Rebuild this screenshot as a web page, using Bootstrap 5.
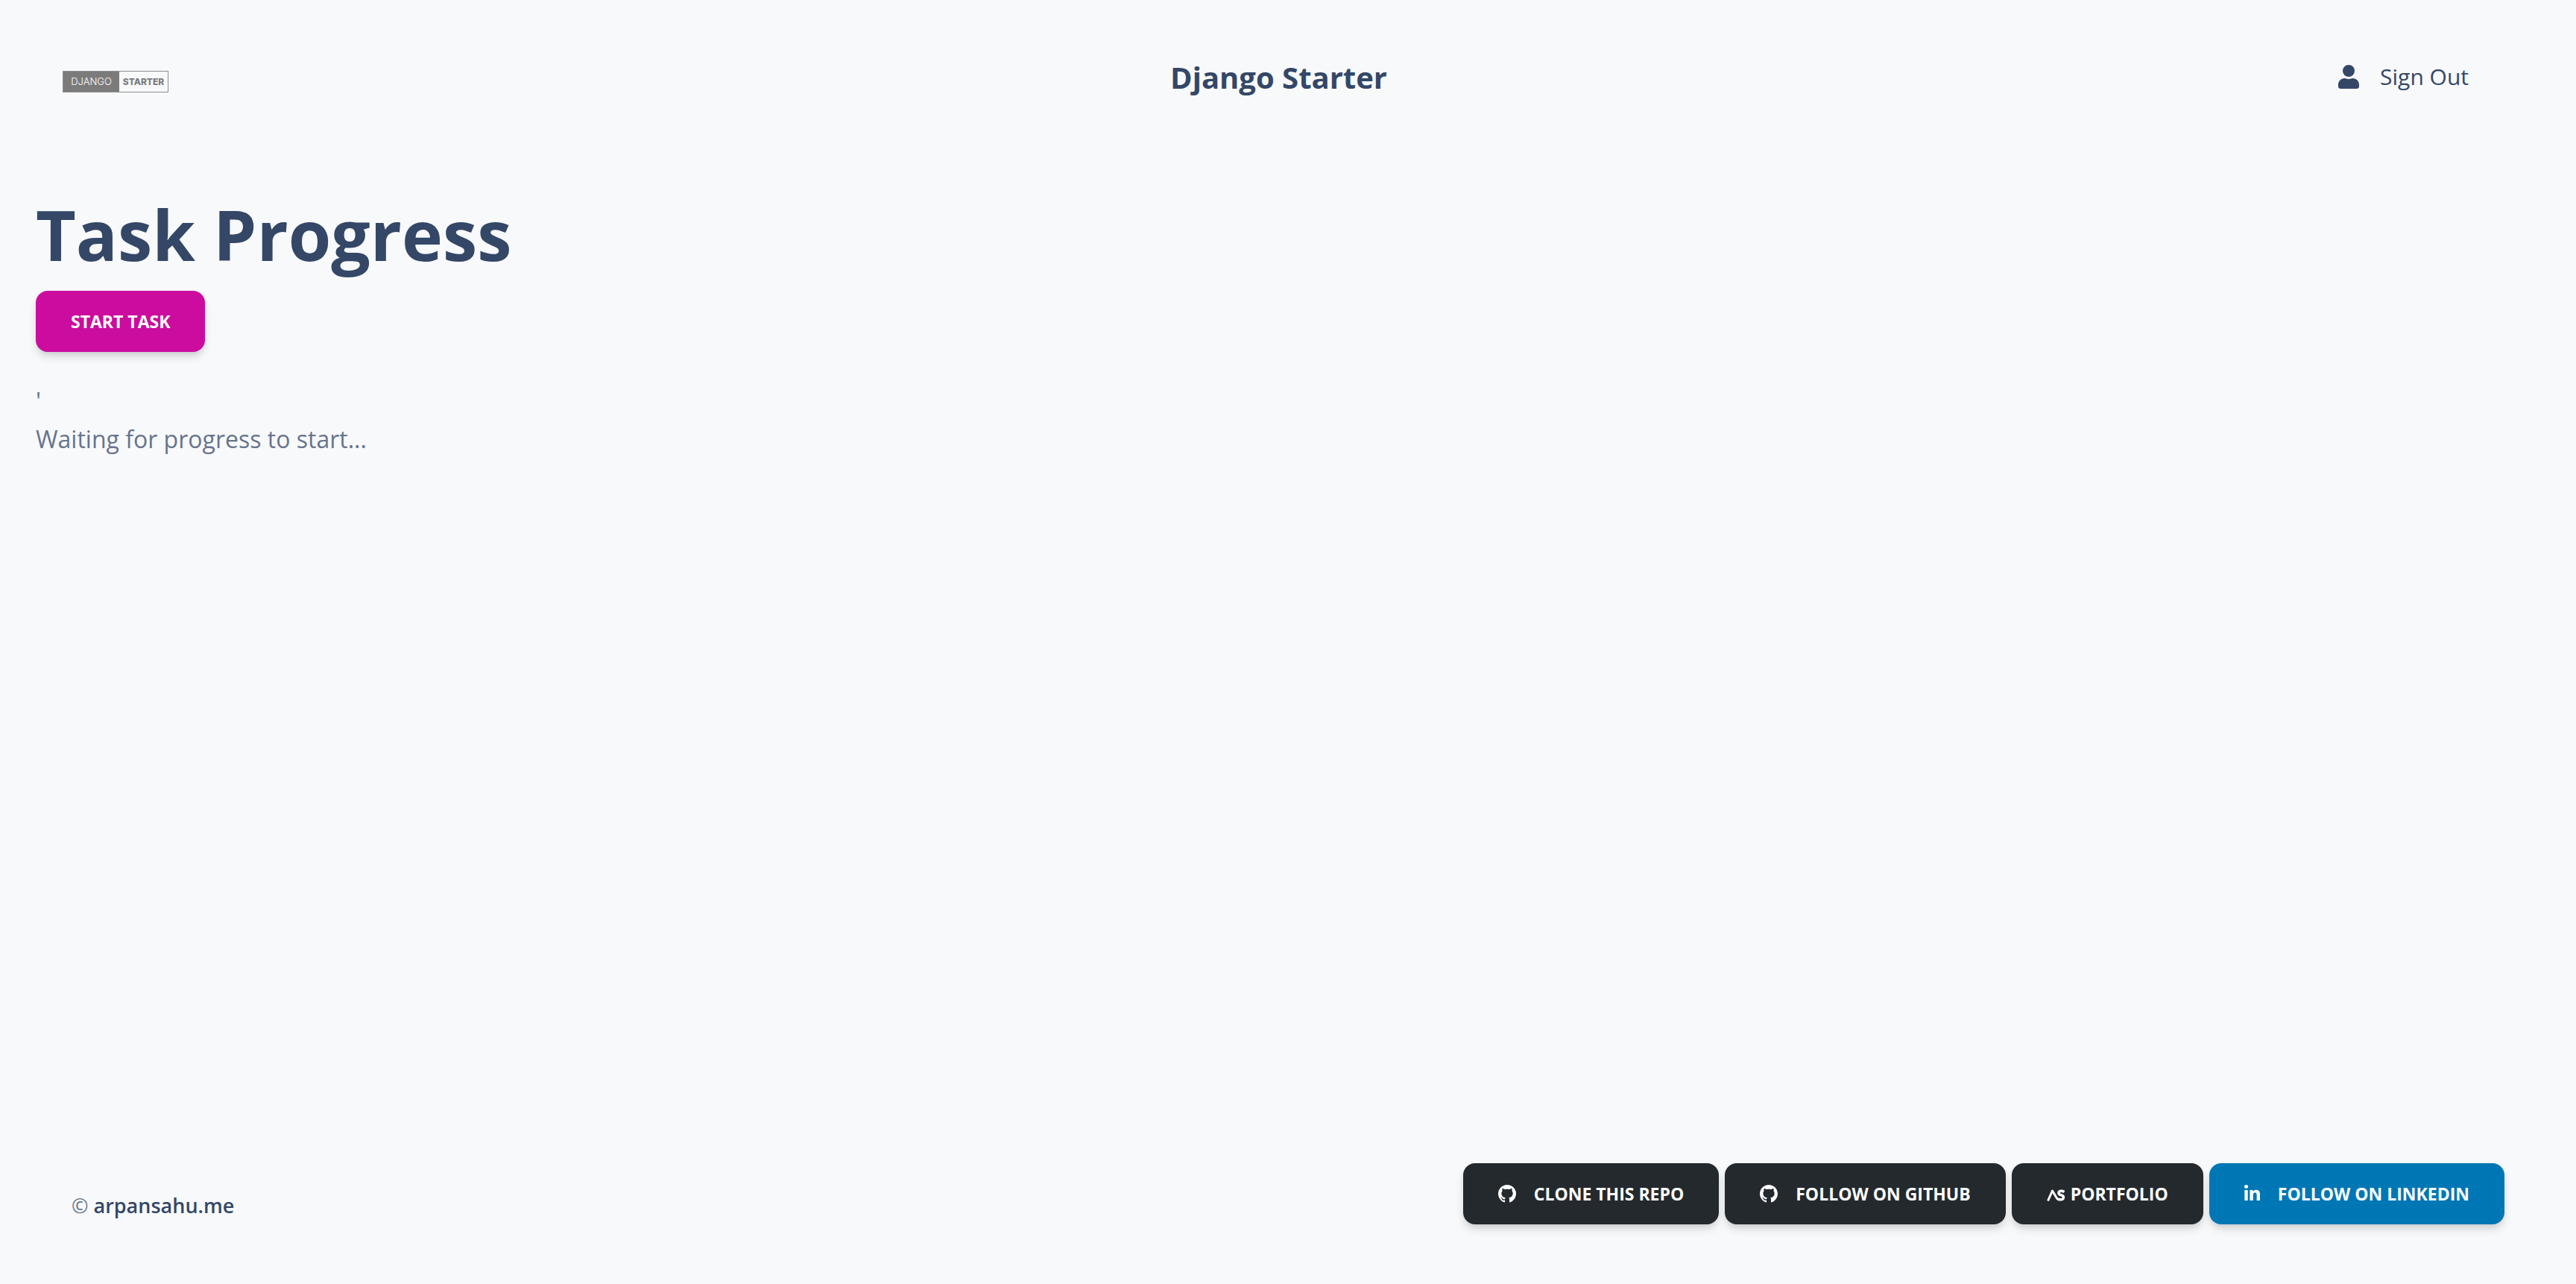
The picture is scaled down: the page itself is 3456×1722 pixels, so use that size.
<!DOCTYPE html>
<html lang="en">
<head>
<meta charset="utf-8">
<meta name="viewport" content="width=device-width, initial-scale=1">
<title>Task Progress</title>
<link href="https://cdn.jsdelivr.net/npm/bootstrap@5.3.0/dist/css/bootstrap.min.css" rel="stylesheet">
<style>
  body { background: #f8f9fb; color: #67748e; font-family: "Open Sans", sans-serif; font-size: 32px; line-height: 51px; }
  .ink { color: #344767; }
  .topbar { padding: 64px 144px 0 84px; height: 144px; }
  .brand { padding: 31px 68px 0 0; }
  .logo-box { border: 1px solid #8e8e8e; height: 29px; width: 142px; font: 400 12px/27px Inter, sans-serif; color: #7b7b7b; }
  .logo-dark { background: #7b7b7b; color: #fff; width: 75px; font-size: 13px; font-weight: 300; }
  .logo-light { font-weight: 800; }
  .site-title { font-size: 40px; line-height: 80px; font-weight: 700; }
  .sign-out { gap: 28px; font-size: 30px; line-height: 78px; }
  .content-area { padding: 110px 48px 0; }
  .content-area h1 { font-size: 93px; line-height: 120px; font-weight: 700; margin-bottom: 16px; }
  .act { --bs-btn-color: #fff; --bs-btn-hover-color: #fff; --bs-btn-border-width: 0; --bs-btn-border-radius: 16px; --bs-btn-font-size: 23px; --bs-btn-font-weight: 700; --bs-btn-padding-x: 47px; --bs-btn-padding-y: 0; line-height: 82px; height: 82px; box-shadow: 0 8px 14px -2px rgba(0,0,0,.12), 0 4px 8px -2px rgba(0,0,0,.1); display: inline-flex; align-items: center; justify-content: center; white-space: nowrap; }
  .act-start { --bs-btn-bg: #cb0c9f; --bs-btn-hover-bg: #b00a8a; margin-bottom: 40px; }
  .act-dark { --bs-btn-bg: #24292e; --bs-btn-hover-bg: #111; }
  .act-linkedin { --bs-btn-bg: #0077b5; --bs-btn-hover-bg: #00669c; }
  .page-foot { padding: 0 96px 80px; }
  .copyright { font-size: 27px; line-height: 50px; }
  .copyright a { font-weight: 600; }
</style>
<script src="https://cdn.jsdelivr.net/npm/bootstrap@5.3.0/dist/js/bootstrap.bundle.min.js" defer></script>
</head>
<body class="d-flex flex-column min-vh-100">
<header class="topbar d-flex justify-content-between align-items-start">
  <a class="brand text-decoration-none d-block" href="#">
    <span class="logo-box d-flex"><span class="logo-dark text-center">DJANGO</span><span class="logo-light flex-fill text-center">STARTER</span></span>
  </a>
  <a class="site-title ink text-decoration-none" href="#">Django Starter</a>
  <a class="sign-out ink text-decoration-none d-flex align-items-center" href="#">
    <svg width="28" height="32" viewBox="0 0 448 512" fill="currentColor" aria-hidden="true"><path d="M224 256A128 128 0 1 0 224 0a128 128 0 0 0 0 256zm89.600 32h-16.700c-22.200 10.200-46.900 16-72.900 16s-50.600-5.800-72.900-16h-16.700C60.200 288 0 348.200 0 422.400V464c0 26.500 21.500 48 48 48h352c26.500 0 48-21.500 48-48v-41.600c0-74.200-60.200-134.400-134.400-134.400z"/></svg>
    <span>Sign Out</span>
  </a>
</header>
<main class="content-area">
  <h1 class="ink">Task Progress</h1>
  <button type="button" class="btn act act-start">START TASK</button>
  <div>'</div>
  <div>Waiting for progress to start...</div>
</main>
<footer class="page-foot mt-auto d-flex justify-content-between align-items-end">
  <div class="copyright">© <a class="ink text-decoration-none" href="#">arpansahu.me</a></div>
  <div class="d-flex gap-2">
    <a class="btn act act-dark gap-4" href="#"><svg width="24" height="24" viewBox="0 0 16 16" fill="currentColor" aria-hidden="true"><path d="M8 0C3.580 0 0 3.580 0 8c0 3.540 2.290 6.530 5.470 7.590.4.070.55-.17.55-.38 0-.19-.01-.82-.01-1.490-2.010.37-2.530-.49-2.690-.94-.09-.23-.48-.94-.82-1.130-.28-.15-.68-.52-.01-.53.63-.01 1.080.58 1.230.82.72 1.210 1.870.87 2.330.66.070-.52.28-.87.51-1.070-1.780-.2-3.640-.89-3.640-3.950 0-.87.31-1.590.82-2.150-.08-.2-.36-1.020.08-2.120 0 0 .67-.21 2.200.82.64-.18 1.320-.27 2-.27s1.360.09 2 .27c1.530-1.040 2.200-.82 2.200-.82.44 1.100.16 1.920.08 2.120.51.56.82 1.270.82 2.150 0 3.070-1.870 3.750-3.650 3.950.29.25.54.73.54 1.480 0 1.070-.01 1.930-.01 2.200 0 .21.15.46.55.38A8.010 8.010 0 0 0 16 8c0-4.420-3.580-8-8-8z"/></svg><span>CLONE THIS REPO</span></a>
    <a class="btn act act-dark gap-4" href="#"><svg width="24" height="24" viewBox="0 0 16 16" fill="currentColor" aria-hidden="true"><path d="M8 0C3.580 0 0 3.580 0 8c0 3.540 2.290 6.530 5.470 7.590.4.070.55-.17.55-.38 0-.19-.01-.82-.01-1.490-2.010.37-2.530-.49-2.690-.94-.09-.23-.48-.94-.82-1.130-.28-.15-.68-.52-.01-.53.63-.01 1.080.58 1.230.82.72 1.210 1.870.87 2.330.66.070-.52.28-.87.51-1.070-1.780-.2-3.640-.89-3.640-3.950 0-.87.31-1.590.82-2.150-.08-.2-.36-1.020.08-2.120 0 0 .67-.21 2.200.82.64-.18 1.320-.27 2-.27s1.360.09 2 .27c1.530-1.040 2.200-.82 2.200-.82.44 1.100.16 1.920.08 2.120.51.56.82 1.270.82 2.150 0 3.070-1.870 3.750-3.650 3.950.29.25.54.73.54 1.480 0 1.070-.01 1.930-.01 2.200 0 .21.15.46.55.38A8.010 8.010 0 0 0 16 8c0-4.420-3.580-8-8-8z"/></svg><span>FOLLOW ON GITHUB</span></a>
    <a class="btn act act-dark gap-2" href="#"><svg width="24" height="24" viewBox="0 0 24 24" fill="none" stroke="currentColor" aria-hidden="true"><path stroke-width="3" stroke-linejoin="round" d="M1.500 21.500 7.500 8l6 10q1.500 2 4 2"/><path stroke-width="3.600" d="M23.500 9.500C20.500 7.500 16 7.800 16 11c0 3.500 6.500 2 6.500 5.500 0 3.500-4 4-7 2.500"/></svg><span>PORTFOLIO</span></a>
    <a class="btn act act-linkedin gap-4" href="#"><svg width="21" height="24" viewBox="0 0 448 512" fill="currentColor" aria-hidden="true"><path d="M100.280 448H7.400V148.900h92.880zM53.790 108.100C24.090 108.100 0 83.500 0 53.800a53.790 53.790 0 0 1 107.580 0c0 29.700-24.100 54.300-53.790 54.300zM447.900 448h-92.680V302.400c0-34.700-.7-79.200-48.290-79.200-48.290 0-55.690 37.700-55.690 76.700V448h-92.780V148.900h89.080v40.800h1.300c12.400-23.500 42.690-48.300 87.880-48.300 94 0 111.280 61.900 111.280 142.300V448z"/></svg><span>FOLLOW ON LINKEDIN</span></a>
  </div>
</footer>
</body>
</html>
